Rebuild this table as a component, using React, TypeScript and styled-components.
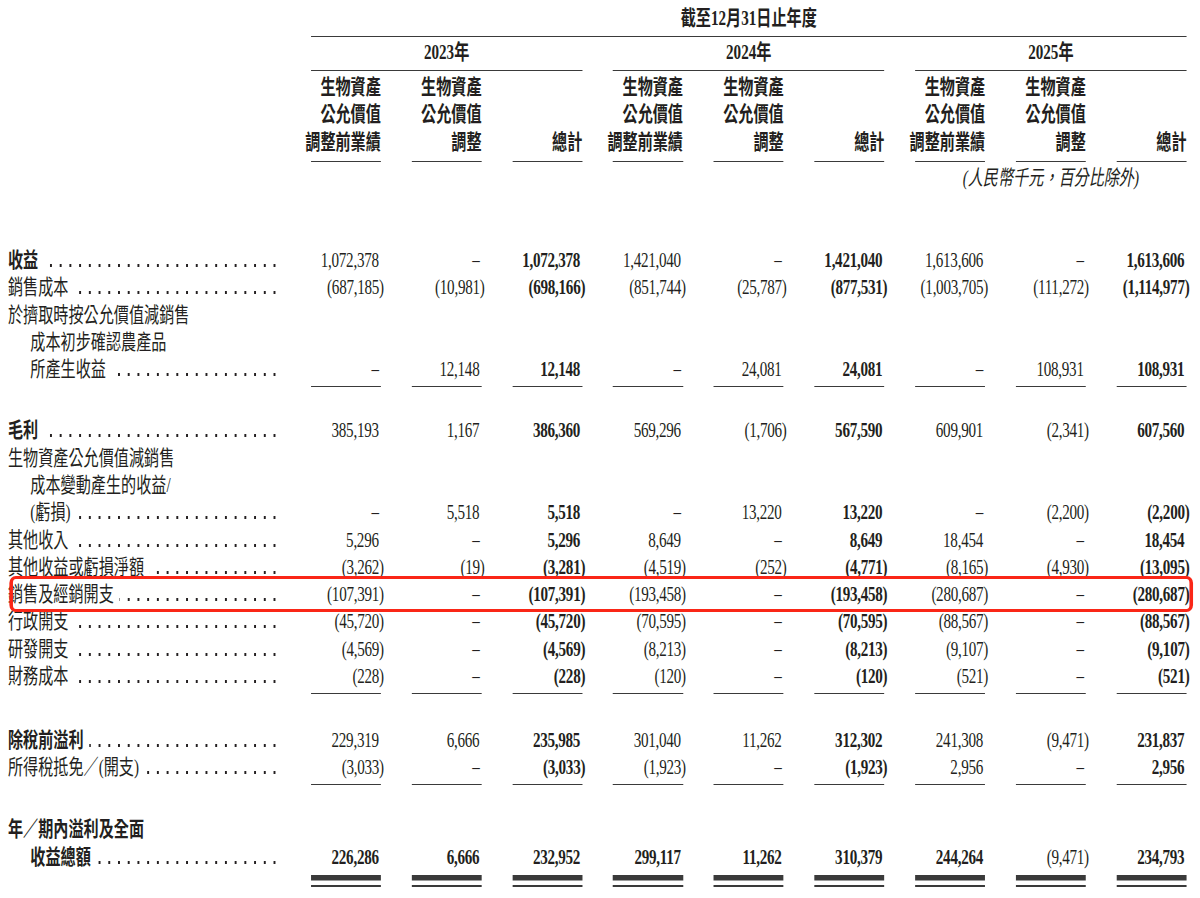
import React, { FC } from 'react';
import styled, { createGlobalStyle, css } from 'styled-components';

// the statement is set in a condensed face, so the whole sheet is laid out
// wide and squeezed horizontally
const SCALE = 0.72;
const LINE = 27.3;
const LABEL_W = 378;
const COL_W = 97.2;
const GAP = 42.7;
const INK = '#231f20';
const RULE = '#3a3a3a';

type Rule = 'single' | 'double' | undefined;

const GlobalStyle = createGlobalStyle`
  html, body {
    margin: 0;
    padding: 0;
    background: #fff;
  }
  body {
    overflow: hidden;
  }
`;

const Page = styled.div`
  box-sizing: border-box;
  width: ${1200 / SCALE}px;
  height: 898px;
  padding: 4.5px 0 0 11.1px;
  transform: scaleX(${SCALE});
  transform-origin: 0 0;
  font-family: 'Liberation Serif', 'Noto Sans CJK TC', serif;
  font-size: 21px;
  color: ${INK};
`;

const Grid = styled.div`
  display: grid;
  grid-template-columns: ${LABEL_W}px repeat(9, ${COL_W}px);
  column-gap: ${GAP}px;
`;

const headRule = css`
  padding-bottom: 4px;
  border-bottom: 1.5px solid ${RULE};
`;

const Title = styled.div`
  grid-column: 2 / -1;
  text-align: center;
  font-weight: 700;
  line-height: 27px;
  ${headRule};
`;

const YearRow = styled(Grid)`
  margin-top: 2.5px;
`;

const Year = styled.div<{ $col: number }>`
  grid-column: ${p => p.$col} / span 3;
  text-align: center;
  font-weight: 700;
  line-height: 27px;
  ${headRule};
`;

const SubRow = styled(Grid)`
  margin-top: 2.5px;
`;

const SubHead = styled.div<{ $col: number }>`
  grid-column: ${p => p.$col};
  display: flex;
  flex-direction: column;
  align-items: flex-end;
  justify-content: flex-end;
  font-weight: 700;
  line-height: 27.7px;
  white-space: nowrap;
  ${headRule};
`;

const UnitRow = styled(Grid)`
  margin-top: 3.5px;
`;

const Unit = styled.div`
  grid-column: 9;
  display: flex;
  justify-content: center;
  white-space: nowrap;
  font-style: italic;
  line-height: 27px;
`;

const Body = styled.div`
  margin-top: 54.8px;
`;

const Line = styled(Grid)<{ $space?: number }>`
  position: relative;
  margin-top: ${p => p.$space ?? 0}px;
  line-height: ${LINE}px;
`;

const rulePad = (r: Rule) => {
  if (r === 'single') return css`padding-bottom: 3px; border-bottom: 1.5px solid transparent;`;
  if (r === 'double') return css`padding-bottom: 13.7px; border-bottom: 2.5px solid transparent;`;
  return '';
};

const Label = styled.div<{ $rule?: Rule }>`
  align-self: end;
  ${p => rulePad(p.$rule)};
`;

const LabelLine = styled.div<{ $indent?: boolean; $bold?: boolean }>`
  display: flex;
  height: ${LINE}px;
  padding-left: ${p => (p.$indent ? 31 : 0)}px;
  font-weight: ${p => (p.$bold ? 700 : 400)};
  white-space: nowrap;
`;

const Leader = styled.span`
  flex: 1;
  min-width: 0;
  height: 3px;
  margin: 17px 1px 0 8px;
  background-image: radial-gradient(circle, ${INK} 1.2px, transparent 1.8px);
  background-size: 13.5px 3px;
  background-repeat: repeat-x;
  background-position: right center;
`;

const Value = styled.div<{ $rule?: Rule; $bold?: boolean }>`
  align-self: end;
  text-align: right;
  white-space: nowrap;
  padding-right: 3px;
  letter-spacing: -0.4px;
  font-weight: ${p => (p.$bold ? 700 : 400)};
  ${p => rulePad(p.$rule)};
  ${p => p.$rule && css`border-bottom-color: ${RULE};`}
  ${p =>
    p.$rule === 'double' &&
    css`
      background: linear-gradient(${RULE}, ${RULE}) no-repeat;
      background-size: 100% 5.5px;
      background-position: left 0 bottom 4.5px;
    `}
`;

const Close = styled.span`
  margin-right: -7px;
`;

// red annotation frame drawn over the selling & distribution row
const Highlight = styled.div`
  position: absolute;
  z-index: 2;
  top: -5.2px;
  bottom: -3.8px;
  left: 1.6px;
  right: 9.3px;
  border: 3.8px solid #fa2617;
  border-left-width: 5.4px;
  border-right-width: 5.4px;
  border-radius: 9px / 7px;
  pointer-events: none;
`;

interface Entry {
  label: string[];
  values: string[];
  bold?: boolean;
  rule?: Rule;
  space?: number;
  strong?: number[];
  highlight?: boolean;
}

const TOTALS = [2, 5, 8];

const rows: Entry[] = [
  {
    label: ['收益'],
    bold: true,
    values: ['1,072,378', '–', '1,072,378', '1,421,040', '–', '1,421,040', '1,613,606', '–', '1,613,606'],
  },
  {
    label: ['銷售成本'],
    values: ['(687,185)', '(10,981)', '(698,166)', '(851,744)', '(25,787)', '(877,531)', '(1,003,705)', '(111,272)', '(1,114,977)'],
  },
  {
    label: ['於擠取時按公允價值減銷售', '成本初步確認農產品', '所產生收益'],
    values: ['–', '12,148', '12,148', '–', '24,081', '24,081', '–', '108,931', '108,931'],
    rule: 'single',
  },
  {
    label: ['毛利'],
    bold: true,
    space: 30,
    values: ['385,193', '1,167', '386,360', '569,296', '(1,706)', '567,590', '609,901', '(2,341)', '607,560'],
  },
  {
    label: ['生物資產公允價值減銷售', '成本變動產生的收益/', '(虧損)'],
    values: ['–', '5,518', '5,518', '–', '13,220', '13,220', '–', '(2,200)', '(2,200)'],
  },
  {
    label: ['其他收入'],
    values: ['5,296', '–', '5,296', '8,649', '–', '8,649', '18,454', '–', '18,454'],
  },
  {
    label: ['其他收益或虧損淨額'],
    values: ['(3,262)', '(19)', '(3,281)', '(4,519)', '(252)', '(4,771)', '(8,165)', '(4,930)', '(13,095)'],
  },
  {
    label: ['銷售及經銷開支'],
    highlight: true,
    values: ['(107,391)', '–', '(107,391)', '(193,458)', '–', '(193,458)', '(280,687)', '–', '(280,687)'],
  },
  {
    label: ['行政開支'],
    values: ['(45,720)', '–', '(45,720)', '(70,595)', '–', '(70,595)', '(88,567)', '–', '(88,567)'],
  },
  {
    label: ['研發開支'],
    values: ['(4,569)', '–', '(4,569)', '(8,213)', '–', '(8,213)', '(9,107)', '–', '(9,107)'],
  },
  {
    label: ['財務成本'],
    values: ['(228)', '–', '(228)', '(120)', '–', '(120)', '(521)', '–', '(521)'],
    rule: 'single',
  },
  {
    label: ['除稅前溢利'],
    bold: true,
    space: 32.5,
    values: ['229,319', '6,666', '235,985', '301,040', '11,262', '312,302', '241,308', '(9,471)', '231,837'],
  },
  {
    label: ['所得稅抵免／(開支)'],
    values: ['(3,033)', '–', '(3,033)', '(1,923)', '–', '(1,923)', '2,956', '–', '2,956'],
    rule: 'single',
  },
  {
    label: ['年／期內溢利及全面', '收益總額'],
    bold: true,
    space: 31,
    values: ['226,286', '6,666', '232,952', '299,117', '11,262', '310,379', '244,264', '(9,471)', '234,793'],
    strong: [0, 1, 2, 3, 4, 5, 6, 8],
    rule: 'double',
  },
];

const years = [
  { col: 2, text: '2023年' },
  { col: 5, text: '2024年' },
  { col: 8, text: '2025年' },
];

const subHeads = [
  ['生物資產', '公允價值', '調整前業績'],
  ['生物資產', '公允價值', '調整'],
  ['總計'],
];

const Amount: FC<{ v: string }> = ({ v }) =>
  v.endsWith(')') ? (
    <>
      {v.slice(0, -1)}
      <Close>)</Close>
    </>
  ) : (
    <>{v}</>
  );

const Row: FC<{ entry: Entry }> = ({ entry }) => {
  const strong = entry.strong ?? TOTALS;
  const last = entry.label.length - 1;
  return (
    <Line $space={entry.space}>
      <Label $rule={entry.rule}>
        {entry.label.map((text, i) => (
          <LabelLine key={i} $indent={i > 0} $bold={entry.bold}>
            <span>{text}</span>
            {i === last && <Leader />}
          </LabelLine>
        ))}
      </Label>
      {entry.values.map((v, i) => (
        <Value key={i} $rule={entry.rule} $bold={strong.includes(i)}>
          <Amount v={v} />
        </Value>
      ))}
      {entry.highlight && <Highlight />}
    </Line>
  );
};

export default function App() {
  return (
    <>
      <GlobalStyle />
      <Page>
        <Grid>
          <Title>截至12月31日止年度</Title>
        </Grid>
        <YearRow>
          {years.map(y => (
            <Year key={y.col} $col={y.col}>
              {y.text}
            </Year>
          ))}
        </YearRow>
        <SubRow>
          {years.map(y =>
            subHeads.map((lines, j) => (
              <SubHead key={`${y.col}-${j}`} $col={y.col + j}>
                {lines.map(l => (
                  <span key={l}>{l}</span>
                ))}
              </SubHead>
            ))
          )}
        </SubRow>
        <UnitRow>
          <Unit>(人民幣千元，百分比除外)</Unit>
        </UnitRow>
        <Body>
          {rows.map((r, i) => (
            <Row key={i} entry={r} />
          ))}
        </Body>
      </Page>
    </>
  );
}
